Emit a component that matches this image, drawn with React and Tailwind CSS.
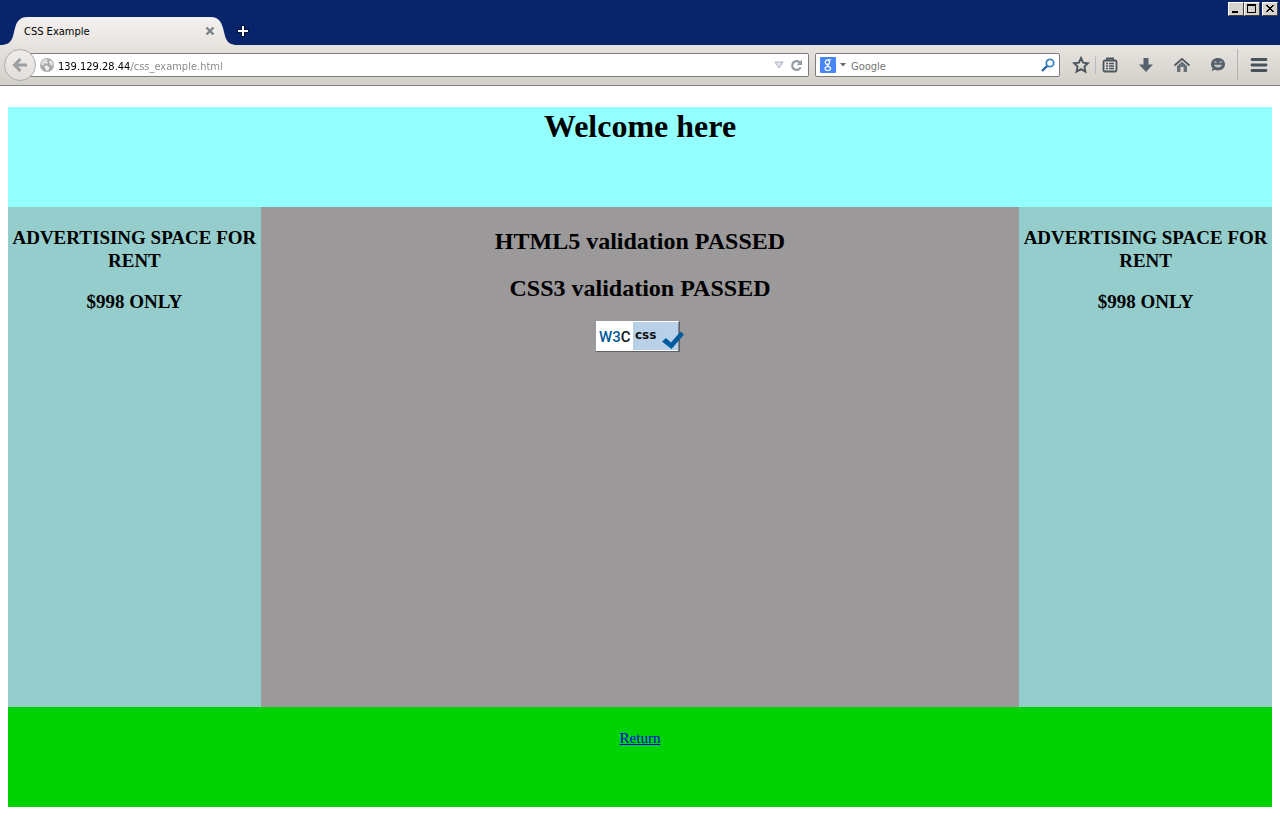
import React from "react";

function TabShape() {
  return (
    <div className="absolute inset-0 flex" aria-hidden="true">
      <svg width="28" height="28" viewBox="0 0 28 28">
        <defs>
          <linearGradient id="tabL" x1="0" y1="0" x2="0" y2="1">
            <stop offset="0" stopColor="#f3f1f0" />
            <stop offset="1" stopColor="#e7e3df" />
          </linearGradient>
        </defs>
        <path d="M0 28C7 28 11 26 13 19L15 11C17 4 20 0 27 0H28V28Z" fill="url(#tabL)" />
      </svg>
      <div className="flex-1 bg-linear-to-b from-[#f3f1f0] to-[#e7e3df]" />
      <svg width="28" height="28" viewBox="0 0 28 28">
        <path d="M28 28C21 28 17 26 15 19L13 11C11 4 8 0 1 0H0V28Z" fill="url(#tabL)" />
      </svg>
    </div>
  );
}

function WindowButton({ label, children }) {
  return (
    <button
      type="button"
      aria-label={label}
      className="flex h-[14px] w-4 items-center justify-center border border-t-white border-l-white border-r-[#404040] border-b-[#404040] bg-[#d6d3ce]"
    >
      <svg width="14" height="12" viewBox="0 0 14 12" shapeRendering="crispEdges">
        {children}
      </svg>
    </button>
  );
}

function ToolButton({ label, className, children }) {
  return (
    <button type="button" aria-label={label} className={"flex h-6 items-center justify-center " + className}>
      <svg width="18" height="18" viewBox="0 0 18 18" fill="none">
        {children}
      </svg>
    </button>
  );
}

function TitleBar() {
  return (
    <header className="flex h-[45px] items-end bg-[#08246b]">
      <div className="relative flex h-7 w-[238px] items-center justify-between pr-[23px] pl-6">
        <TabShape />
        <span className="relative pt-[2px]">CSS Example</span>
        <button type="button" aria-label="Close tab" className="relative">
          <svg width="10" height="10" viewBox="0 0 10 10">
            <path d="M1.5 1.5L8.5 8.5M8.5 1.5L1.5 8.5" stroke="#7b8389" strokeWidth="2.4" />
          </svg>
        </button>
      </div>
      <button type="button" aria-label="New tab" className="-ml-px flex h-7 w-3 shrink-0 items-center justify-center">
        <svg width="12" height="12" viewBox="0 0 12 12" shapeRendering="crispEdges">
          <path d="M6 0V12M0 6H12" stroke="#041238" strokeWidth="4" />
          <path d="M6 1V11M1 6H11" stroke="#fff" strokeWidth="2" />
        </svg>
      </button>
      <div className="ml-auto flex self-start pt-[2px] pr-[2px]">
        <WindowButton label="Minimize">
          <path d="M3 8H9V10H3Z" fill="#000" />
        </WindowButton>
        <WindowButton label="Maximize">
          <path d="M2 1H11V10H2ZM3 3V9H10V3Z" fill="#000" fillRule="evenodd" />
        </WindowButton>
        <div className="w-[2px]" />
        <WindowButton label="Close">
          <path d="M3 2H5V3H6V4H8V3H9V2H11V3H10V4H9V5H8V6H9V7H10V8H11V9H9V8H8V7H6V8H5V9H3V8H4V7H5V6H6V5H5V4H4V3H3Z" fill="#000" />
        </WindowButton>
      </div>
    </header>
  );
}

function NavBar() {
  return (
    <nav className="flex h-[41px] items-center border-b border-[#808080] bg-linear-to-b from-[#e7e3df] to-[#d3cfc9] pl-1">
      <button
        type="button"
        aria-label="Back"
        className="z-10 flex size-8 shrink-0 items-center justify-center rounded-full border border-[#a9adb1] bg-linear-to-b from-[#f0eceb] to-[#e2dedb]"
      >
        <svg width="18" height="18" viewBox="0 0 18 18" fill="none">
          <path d="M9.5 3L3.5 9L9.5 15M4 9H16" stroke="#9a9fa3" strokeWidth="3" />
        </svg>
      </button>
      <div className="-ml-2 flex h-6 min-w-0 flex-1 items-center rounded-r-xs border border-[#7d7d7d] bg-white pr-[5px] pl-[11px]">
        <svg width="14" height="14" viewBox="0 0 14 14" className="shrink-0">
          <circle cx="7" cy="7" r="7" fill="#a9a9a9" />
          <path d="M2 3L5 1L8 1.5L7 3.5L8.5 5L6 6L4.5 5L3.5 7L1.5 7.5L1 5Z" fill="#dedede" />
          <path d="M9 3L11 2.5L13 5.5L12.5 8L10.5 7L9.5 5Z" fill="#e6e6e6" />
          <path d="M4 8L7 7.5L9.5 9.5L8.5 12L6.5 13L5.5 10.5Z" fill="#f0f0f0" />
        </svg>
        <input
          aria-label="Address"
          defaultValue="139.129.28.44/css_example.html"
          className="ml-1 h-5 min-w-0 flex-1 bg-[linear-gradient(90deg,#000_73px,#858585_73px)] bg-clip-text pt-[2px] text-transparent caret-black outline-none"
        />
        <button type="button" aria-label="Show history" className="mr-[6px]">
          <svg width="10" height="8" viewBox="0 0 10 8">
            <path d="M1 1H9L5 7Z" fill="#e3e7f0" stroke="#aab1bd" />
          </svg>
        </button>
        <button type="button" aria-label="Reload">
          <svg width="13" height="13" viewBox="0 0 13 13" fill="none">
            <path d="M9.5 3.2A4.4 4.4 0 1 0 10.6 8.4" stroke="#929ba5" strokeWidth="2.2" />
            <path d="M12 0.5V6H6.8Z" fill="#929ba5" />
          </svg>
        </button>
      </div>
      <div className="ml-[6px] flex h-6 w-[245px] items-center rounded-xs border border-[#7d7d7d] bg-white px-1">
        <button type="button" aria-label="Choose search engine" className="flex items-center gap-1">
          <svg width="16" height="16" viewBox="0 0 16 16">
            <rect width="16" height="16" rx="1" fill="#4787f5" />
            <g fill="none" stroke="#fff">
              <ellipse cx="7.4" cy="5.2" rx="2.1" ry="2.3" strokeWidth="1.3" />
              <path d="M8 2.8H11.2M8.6 7.4C6.6 8.4 7.4 8.8 8.9 9.6" strokeWidth="1.1" />
              <ellipse cx="7.8" cy="11.6" rx="2.8" ry="1.9" strokeWidth="1.2" />
            </g>
          </svg>
          <svg width="6" height="4" viewBox="0 0 6 4">
            <path d="M0 0H6L3 3.5Z" fill="#6b6b6b" />
          </svg>
        </button>
        <input
          aria-label="Search"
          placeholder="Google"
          className="ml-[5px] h-5 min-w-0 flex-1 pt-[2px] outline-none placeholder:text-[#757575]"
        />
        <button type="button" aria-label="Go">
          <svg width="14" height="14" viewBox="0 0 14 14" fill="none">
            <circle cx="9" cy="5" r="3.7" stroke="#3a86c4" strokeWidth="1.8" />
            <path d="M6.2 7.8L1 13" stroke="#2d66a8" strokeWidth="2.4" />
          </svg>
        </button>
      </div>
      <ToolButton label="Bookmark this page" className="ml-[7px] w-7">
        <path d="M9 2L11.1 6.6L16 7.2L12.4 10.6L13.4 15.6L9 13.1L4.6 15.6L5.6 10.6L2 7.2L6.9 6.6Z" stroke="#4c565f" strokeWidth="1.9" />
      </ToolButton>
      <div className="h-[18px] w-px bg-[#b4babd]" />
      <ToolButton label="Bookmarks" className="w-7">
        <path d="M6 4V2.5H12V4" stroke="#4c565f" strokeWidth="1.8" />
        <rect x="2.5" y="4.5" width="13" height="11" rx="1.4" stroke="#4c565f" strokeWidth="1.8" />
        <path d="M5 7.5H7M8 7.5H13M5 10H7M8 10H13M5 12.5H7M8 12.5H13" stroke="#4c565f" strokeWidth="1.4" />
      </ToolButton>
      <ToolButton label="Downloads" className="ml-1 w-9">
        <path d="M6.5 2H11.5V8.5H16L9 16L2 8.5H6.5Z" fill="#56616b" />
      </ToolButton>
      <ToolButton label="Home" className="w-9">
        <path d="M1.5 9.5L9 2.8L16.5 9.5" stroke="#4c565f" strokeWidth="1.7" />
        <path d="M4 10L9 5.6L14 10V16H10.6V11H7.4V16H4Z" fill="#66717a" />
      </ToolButton>
      <ToolButton label="Start a conversation" className="w-9">
        <path d="M9 2C13 2 16 4.7 16 8.2S13 14.4 9 14.4C7.8 14.4 6.8 14.2 5.8 13.7L2.6 15.2L3.6 12C2.5 11 2 9.7 2 8.2C2 4.7 5 2 9 2Z" fill="#56616b" />
        <path d="M5.4 6.6Q6.4 5.2 7.4 6.6M10.6 6.6Q11.6 5.2 12.6 6.6" stroke="#b9bbbc" strokeWidth="1.1" />
        <path d="M5 8.8H13Q12.2 11.4 9 11.4T5 8.8Z" fill="#c3c3c2" />
      </ToolButton>
      <div className="ml-px h-8 w-px bg-[#b5b3b0]" />
      <ToolButton label="Open menu" className="w-[42px]">
        <path d="M2 3.5H16M2 9H16M2 14.5H16" stroke="#48525b" strokeWidth="2.8" strokeLinecap="round" />
      </ToolButton>
    </nav>
  );
}

function CssBadge() {
  return (
    <svg width="88" height="31" viewBox="0 0 88 31" role="img" aria-label="Valid CSS" className="mx-auto block">
      <rect width="84" height="31" fill="#5d6267" />
      <rect width="83" height="30" fill="#fff" />
      <rect x="37" y="1" width="45" height="28" fill="#b8d1e8" />
      <rect x="82" y="1" width="1" height="29" fill="#85898e" />
      <text x="3" y="21" fontFamily="Roboto, 'Liberation Sans', sans-serif" fontWeight="500" fontSize="15" fill="#005a9c">
        W3<tspan fill="#111">C</tspan>
      </text>
      <text x="39" y="18" fontFamily="'DejaVu Sans', sans-serif" fontWeight="bold" fontSize="12" fill="#111">css</text>
      <path d="M66 20.5L70 17L75 21.5L84.5 10.5L88 13.5L75.5 28Z" fill="#005a9c" />
    </svg>
  );
}

function Advert() {
  return (
    <aside className="w-1/5 space-y-[18px] bg-[#95cdcc] pt-[19px] text-[19px] leading-[23px] font-bold">
      <h3>ADVERTISING SPACE FOR RENT</h3>
      <h3>$998 ONLY</h3>
    </aside>
  );
}

export default function App() {
  return (
    <div className="min-h-screen bg-white">
      <div className="font-['DejaVu_Sans_Condensed','DejaVu_Sans',sans-serif] text-[11px] leading-4 text-black">
        <TitleBar />
        <NavBar />
      </div>
      <main className="px-2 pt-[21px] pb-3 text-center font-['Liberation_Serif',serif] text-black">
        <div className="h-[100px] bg-[#93ffff] pt-px">
          <h1 className="text-[32px] leading-9 font-bold">Welcome here</h1>
        </div>
        <div className="flex min-h-[500px]">
          <Advert />
          <section className="w-3/5 bg-[#9c999b] pt-[21px]">
            <h2 className="mb-5 text-2xl leading-[27px] font-bold">HTML5 validation PASSED</h2>
            <h2 className="mb-[19px] text-2xl leading-[27px] font-bold">CSS3 validation PASSED</h2>
            <CssBadge />
          </section>
          <Advert />
        </div>
        <footer className="h-[100px] bg-[#00d100] pt-[21px] text-[15px] leading-5">
          <a href="#" className="text-[#0000ee] underline">Return</a>
        </footer>
      </main>
    </div>
  );
}
